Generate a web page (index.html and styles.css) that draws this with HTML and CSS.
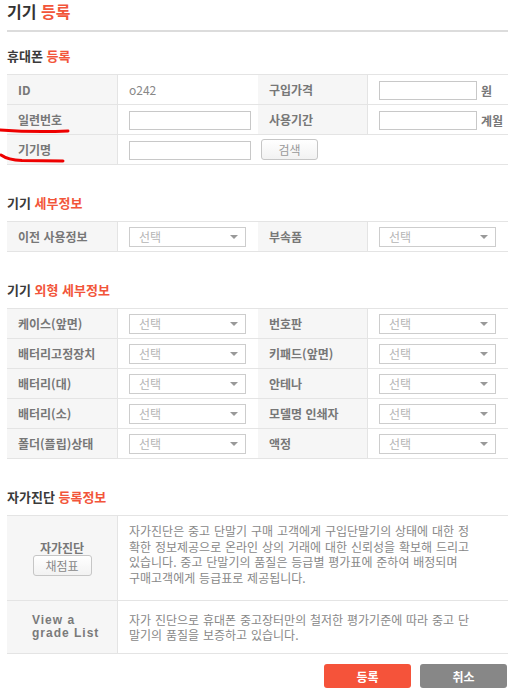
FILE: index.html
```html
<!DOCTYPE html>
<html lang="ko">
<head>
    <meta charset="UTF-8">
    <meta name="viewport" content="width=device-width, initial-scale=1.0">
    <title>기기 등록</title>
    <link rel="stylesheet" href="styles.css">
</head>
<body>
    <div class="page">
        <h1 class="page-title">기기 <em>등록</em></h1>

        <!-- 휴대폰 등록 -->
        <section class="block block-first">
            <h2 class="block-title">휴대폰 <em>등록</em></h2>
            <table class="form-table">
                <colgroup>
                    <col class="col-label"><col class="col-value"><col class="col-label2"><col class="col-value">
                </colgroup>
                <tr>
                    <th>ID</th>
                    <td class="plain">o242</td>
                    <th>구입가격</th>
                    <td><input type="text" class="input input-short"><span class="unit">원</span></td>
                </tr>
                <tr>
                    <th>일련번호</th>
                    <td><input type="text" class="input"></td>
                    <th>사용기간</th>
                    <td><input type="text" class="input input-short"><span class="unit">계월</span></td>
                </tr>
                <tr>
                    <th>기기명</th>
                    <td><input type="text" class="input"></td>
                    <td colspan="2" class="tight"><button type="button" class="btn-small">검색</button></td>
                </tr>
            </table>
        </section>

        <!-- 기기 세부정보 -->
        <section class="block">
            <h2 class="block-title">기기 <em>세부정보</em></h2>
            <table class="form-table">
                <colgroup>
                    <col class="col-label"><col class="col-value"><col class="col-label2"><col class="col-value">
                </colgroup>
                <tr>
                    <th>이전 사용정보</th>
                    <td><div class="select"><span>선택</span><i class="arrow"></i></div></td>
                    <th>부속품</th>
                    <td><div class="select"><span>선택</span><i class="arrow"></i></div></td>
                </tr>
            </table>
        </section>

        <!-- 기기 외형 세부정보 -->
        <section class="block">
            <h2 class="block-title">기기 <em>외형 세부정보</em></h2>
            <table class="form-table">
                <colgroup>
                    <col class="col-label"><col class="col-value"><col class="col-label2"><col class="col-value">
                </colgroup>
                <tr>
                    <th>케이스(앞면)</th>
                    <td><div class="select"><span>선택</span><i class="arrow"></i></div></td>
                    <th>번호판</th>
                    <td><div class="select"><span>선택</span><i class="arrow"></i></div></td>
                </tr>
                <tr>
                    <th>배터리고정장치</th>
                    <td><div class="select"><span>선택</span><i class="arrow"></i></div></td>
                    <th>키패드(앞면)</th>
                    <td><div class="select"><span>선택</span><i class="arrow"></i></div></td>
                </tr>
                <tr>
                    <th>배터리(대)</th>
                    <td><div class="select"><span>선택</span><i class="arrow"></i></div></td>
                    <th>안테나</th>
                    <td><div class="select"><span>선택</span><i class="arrow"></i></div></td>
                </tr>
                <tr>
                    <th>배터리(소)</th>
                    <td><div class="select"><span>선택</span><i class="arrow"></i></div></td>
                    <th>모델명 인쇄자</th>
                    <td><div class="select"><span>선택</span><i class="arrow"></i></div></td>
                </tr>
                <tr>
                    <th>폴더(플립)상태</th>
                    <td><div class="select"><span>선택</span><i class="arrow"></i></div></td>
                    <th>액정</th>
                    <td><div class="select"><span>선택</span><i class="arrow"></i></div></td>
                </tr>
            </table>
        </section>

        <!-- 자가진단 등록정보 -->
        <section class="block">
            <h2 class="block-title">자가진단 <em>등록정보</em></h2>
            <table class="form-table info-table">
                <colgroup>
                    <col class="col-label"><col>
                </colgroup>
                <tr class="row-tall">
                    <th class="center">
                        자가진단
                        <button type="button" class="btn-small btn-score">채점표</button>
                    </th>
                    <td class="desc desc-top">
                        자가진단은 중고 단말기 구매 고객에게 구입단말기의 상태에 대한 정<br>
                        확한 정보제공으로 온라인 상의 거래에 대한 신뢰성을 확보해 드리고<br>
                        있습니다. 중고 단말기의 품질은 등급별 평가표에 준하여 배정되며<br>
                        구매고객에게 등급표로 제공됩니다.
                    </td>
                </tr>
                <tr class="row-mid">
                    <th class="grade">View a<br>grade List</th>
                    <td class="desc">
                        자가 진단으로 휴대폰 중고장터만의 철저한 평가기준에 따라 중고 단<br>
                        말기의 품질을 보증하고 있습니다.
                    </td>
                </tr>
            </table>
        </section>

        <div class="actions">
            <button type="button" class="btn btn-red">등록</button>
            <button type="button" class="btn btn-gray">취소</button>
        </div>

        <!-- 빨간 밑줄 표시 -->
        <svg class="marks" width="80" height="170" viewBox="0 0 80 170">
            <path d="M0 130 Q34 132.5 68 131" />
            <path d="M1 155 Q8 160 22 160.5 L63 161" />
        </svg>
    </div>
</body>
</html>
```

FILE: styles.css
```css
/* styles.css */
body {
    margin: 0;
    font-family: "Noto Sans CJK KR", "Noto Sans", sans-serif;
    font-size: 12px;
    color: #777;
    background-color: #fff;
}

.page {
    position: relative;
    width: 501px;
    padding: 1px 13px 0 7px;
}

em {
    font-style: normal;
    color: #f2553a;
}

.page-title {
    margin: 0;
    font-size: 16px;
    line-height: 20px;
    font-weight: bold;
    color: #333;
    padding-bottom: 9px;
    border-bottom: 2px solid #dcdcdc;
}

.block {
    margin-top: 30px;
}

.block-first {
    margin-top: 16px;
}

.block-title {
    margin: 0 0 10px;
    font-size: 13px;
    line-height: 16px;
    font-weight: bold;
    color: #3a3a3a;
}

.form-table {
    width: 100%;
    border-collapse: separate;
    border-spacing: 0;
    table-layout: fixed;
    border-top: 1px solid #e4e4e4;
}

.form-table tr {
    height: 30px;
}

.col-label {
    width: 111px;
}

.col-label2 {
    width: 110px;
}

.col-value {
    width: 140px;
}

.form-table th,
.form-table td {
    padding: 0 11px;
    border-bottom: 1px solid #e4e4e4;
    text-align: left;
    vertical-align: middle;
    white-space: nowrap;
}

.form-table th {
    background-color: #f6f6f6;
    border-right: 1px solid #e4e4e4;
    font-weight: bold;
    color: #777;
}

.form-table td.plain {
    color: #888;
}

.form-table td.tight {
    padding-left: 3px;
}

.input {
    box-sizing: border-box;
    width: 122px;
    height: 19px;
    padding: 0 4px;
    border: 1px solid #c8c8c8;
    vertical-align: middle;
    font-size: 12px;
}

.input-short {
    width: 98px;
}

.unit {
    margin-left: 4px;
    font-weight: bold;
    color: #777;
    vertical-align: middle;
}

.select {
    box-sizing: border-box;
    width: 117px;
    height: 20px;
    border: 1px solid #cdcdcd;
    padding: 0 7px 0 9px;
    display: flex;
    align-items: center;
    justify-content: space-between;
    color: #b5b5b5;
    line-height: 18px;
}

.arrow {
    width: 0;
    height: 0;
    border-left: 4px solid transparent;
    border-right: 4px solid transparent;
    border-top: 4px solid #999;
}

.btn-small {
    box-sizing: border-box;
    width: 57px;
    height: 21px;
    padding: 0;
    border: 1px solid #c6c6c6;
    border-radius: 3px;
    background: linear-gradient(#fff, #f2f2f2);
    font-family: inherit;
    font-size: 12px;
    color: #999;
    vertical-align: middle;
}

.btn-score {
    display: block;
    width: 59px;
    margin: 0 auto;
    font-weight: normal;
    color: #888;
}

.info-table .row-tall {
    height: 85px;
}

.info-table .row-mid {
    height: 53px;
}

.info-table th.center {
    text-align: center;
    line-height: 15px;
}

.info-table th.grade {
    padding-left: 25px;
    font-family: "Liberation Sans", Arial, sans-serif;
    letter-spacing: 1px;
    line-height: 13.5px;
    color: #7a7a7a;
}

.info-table td.desc {
    line-height: 15.5px;
    color: #888;
    word-spacing: 0.5px;
}

.info-table td.desc-top {
    vertical-align: top;
    padding-top: 7px;
}

.actions {
    display: flex;
    justify-content: flex-end;
    gap: 9px;
    margin-top: 10px;
    padding-right: 1px;
}

.btn {
    width: 87px;
    height: 24px;
    border: none;
    border-radius: 3px;
    font-family: inherit;
    font-size: 12px;
    font-weight: bold;
    color: #fff;
    cursor: pointer;
}

.btn-red {
    background-color: #f5533a;
}

.btn-gray {
    background-color: #878787;
}

.marks {
    position: absolute;
    left: 0;
    top: 0;
    pointer-events: none;
}

.marks path {
    fill: none;
    stroke: #ee0000;
    stroke-width: 3;
    stroke-linecap: round;
}
```
